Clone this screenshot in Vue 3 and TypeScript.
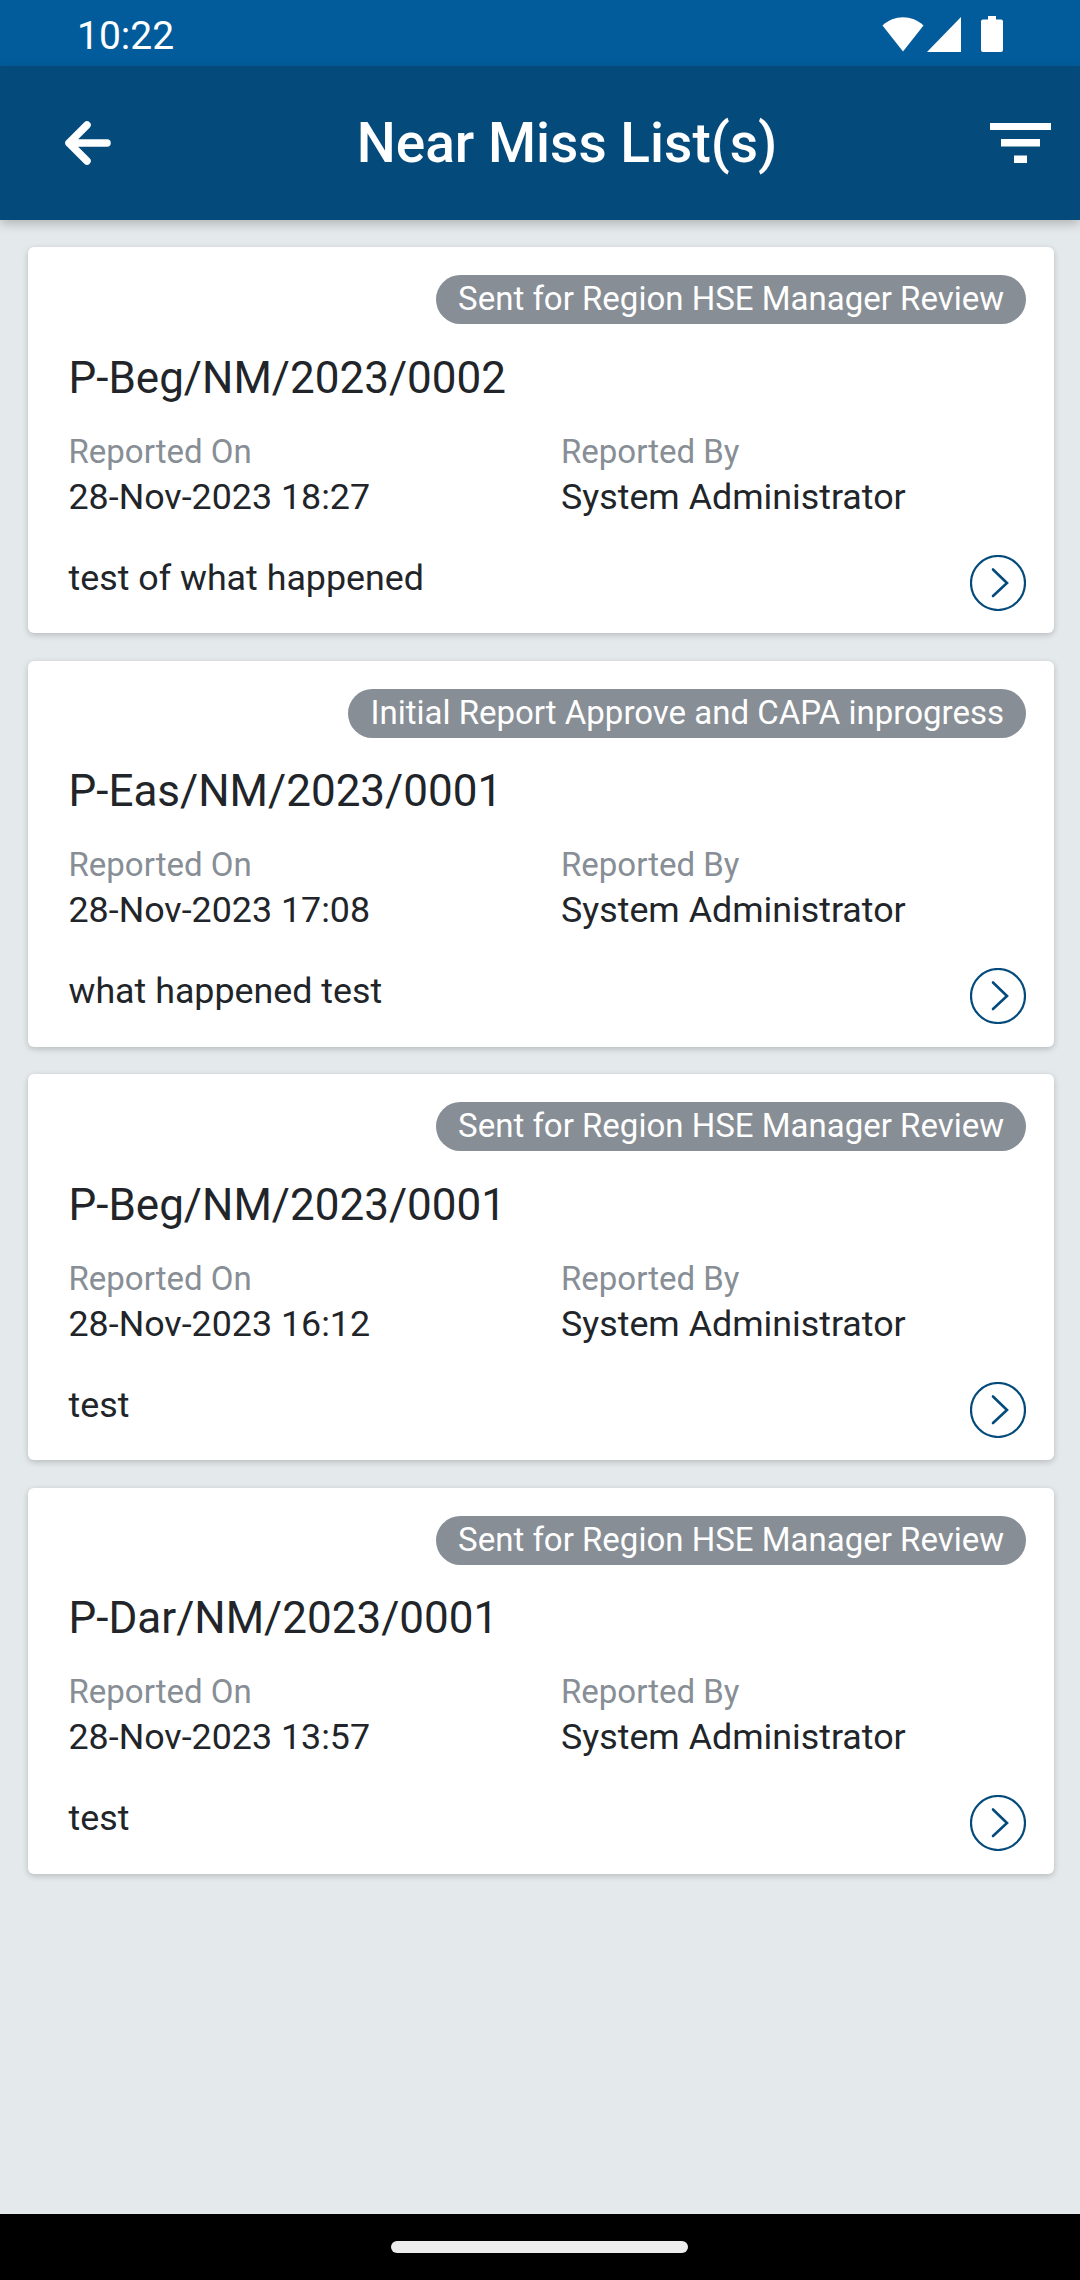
<script setup lang="ts">
interface Item { status: string; code: string; date: string; note: string }
const items: Item[] = [
  { status: 'Sent for Region HSE Manager Review', code: 'P-Beg/NM/2023/0002', date: '28-Nov-2023 18:27', note: 'test of what happened' },
  { status: 'Initial Report Approve and CAPA inprogress', code: 'P-Eas/NM/2023/0001', date: '28-Nov-2023 17:08', note: 'what happened test' },
  { status: 'Sent for Region HSE Manager Review', code: 'P-Beg/NM/2023/0001', date: '28-Nov-2023 16:12', note: 'test' },
  { status: 'Sent for Region HSE Manager Review', code: 'P-Dar/NM/2023/0001', date: '28-Nov-2023 13:57', note: 'test' },
]
</script>

<template>
  <div class="screen">
    <div class="status">
      <span class="time">10:22</span>
      <div class="status-icons">
        <svg width="42" height="36" viewBox="0 0 42 36"><path d="M0.5 9.5C12 -1.5 30 -1.5 41.5 9.5L21 35.5Z" fill="#fff"/></svg>
        <svg width="34" height="35" viewBox="0 0 34 35"><path d="M34 0V35H0Z" fill="#fff"/></svg>
        <svg class="battery" width="22" height="36" viewBox="0 0 22 36"><path d="M7 0H15V3.5H20A2 2 0 0 1 22 5.500V34A2 2 0 0 1 20 36H2A2 2 0 0 1 0 34V5.500A2 2 0 0 1 2 3.500H7Z" fill="#fff"/></svg>
      </div>
    </div>
    <header class="toolbar">
      <svg class="back" width="48" height="44" viewBox="0 0 48 44"><path d="M24 4L6 22L24 40M6 22H44" fill="none" stroke="#fff" stroke-width="7.500" stroke-linecap="round" stroke-linejoin="round"/></svg>
      <h1 class="title">Near Miss List(s)</h1>
      <svg class="filter" width="61" height="40" viewBox="0 0 61 40"><path d="M0 0H61V7H0ZM11 16H50V23.500H11ZM24 32.500H37V40H24Z" fill="#fff"/></svg>
    </header>
    <main class="list">
      <article v-for="item in items" :key="item.code" class="card">
        <div class="pill-row"><span class="pill">{{ item.status }}</span></div>
        <div class="code">{{ item.code }}</div>
        <div class="cols">
          <div class="col">
            <div class="label">Reported On</div>
            <div class="value">{{ item.date }}</div>
          </div>
          <div class="col">
            <div class="label">Reported By</div>
            <div class="value">System Administrator</div>
          </div>
        </div>
        <div class="foot">
          <span class="note">{{ item.note }}</span>
          <svg class="go" width="56" height="56" viewBox="0 0 56 56"><circle cx="28" cy="28" r="27" fill="none" stroke="#044b7c" stroke-width="2.200"/><path d="M23 14.500L37 28L23 41" fill="none" stroke="#044b7c" stroke-width="2.600" stroke-linecap="round" stroke-linejoin="miter"/></svg>
        </div>
      </article>
    </main>
    <footer class="nav"><span class="home"></span></footer>
  </div>
</template>

<style>
html, body { margin: 0; padding: 0; }
</style>

<style scoped>
.screen {
  width: 1080px;
  height: 2280px;
  display: flex;
  flex-direction: column;
  background: #e4e9ec;
  font-family: Roboto, "Liberation Sans", sans-serif;
  overflow: hidden;
}
.status {
  height: 66px;
  background: #025c9b;
  display: flex;
  align-items: center;
  justify-content: space-between;
  padding: 0 77px;
  box-sizing: border-box;
  flex: none;
}
.time { color: #fff; font-size: 39px; line-height: 1; margin-top: 7px; }
.status-icons { display: flex; align-items: center; gap: 3px; margin-top: 2px; }
.battery { margin-left: 17px; }
.toolbar {
  height: 154px;
  flex: none;
  background: #044b7c;
  box-shadow: 0 4px 10px rgba(0, 0, 0, 0.22);
  display: flex;
  align-items: center;
  padding: 0 29px 0 63px;
  box-sizing: border-box;
  position: relative;
  z-index: 1;
}
.back { flex: none; }
.title {
  flex: 1;
  margin: 0;
  text-align: center;
  color: #fff;
  font-size: 55px;
  font-weight: 500;
  line-height: 60px;
  padding-left: 33px;
}
.filter { flex: none; }
.list {
  flex: 1;
  padding: 27px 26px 0 28px;
  display: flex;
  flex-direction: column;
  gap: 27.500px;
}
.card {
  height: 386px;
  box-sizing: border-box;
  background: #fff;
  border-radius: 6px;
  box-shadow: 0 2px 6px rgba(0, 0, 0, 0.2);
  padding: 28px 28px 0 40.500px;
}
.pill-row { display: flex; justify-content: flex-end; }
.pill {
  height: 49px;
  line-height: 47px;
  padding: 0 22px;
  border-radius: 25px;
  background: #878e95;
  color: #fff;
  font-size: 33px;
  white-space: nowrap;
}
.code { margin-top: 27.500px; font-size: 44px; line-height: 52px; color: #212529; }
.cols { display: flex; margin-top: 28px; }
.col { width: 492.500px; flex: none; }
.label { color: #878e95; font-size: 33px; line-height: 40px; }
.value { color: #212529; font-size: 35.800px; line-height: 40px; margin-top: 5px; }
.foot { display: flex; justify-content: space-between; align-items: flex-start; margin-top: 41px; }
.note { color: #212529; font-size: 35.800px; line-height: 40px; }
.go { margin-top: -3px; }
.nav {
  height: 66px;
  flex: none;
  background: #000;
  display: flex;
  justify-content: center;
  padding-top: 27px;
  box-sizing: border-box;
}
.home { width: 297px; height: 12px; border-radius: 6px; background: #ededed; margin-right: 1px; }
</style>
